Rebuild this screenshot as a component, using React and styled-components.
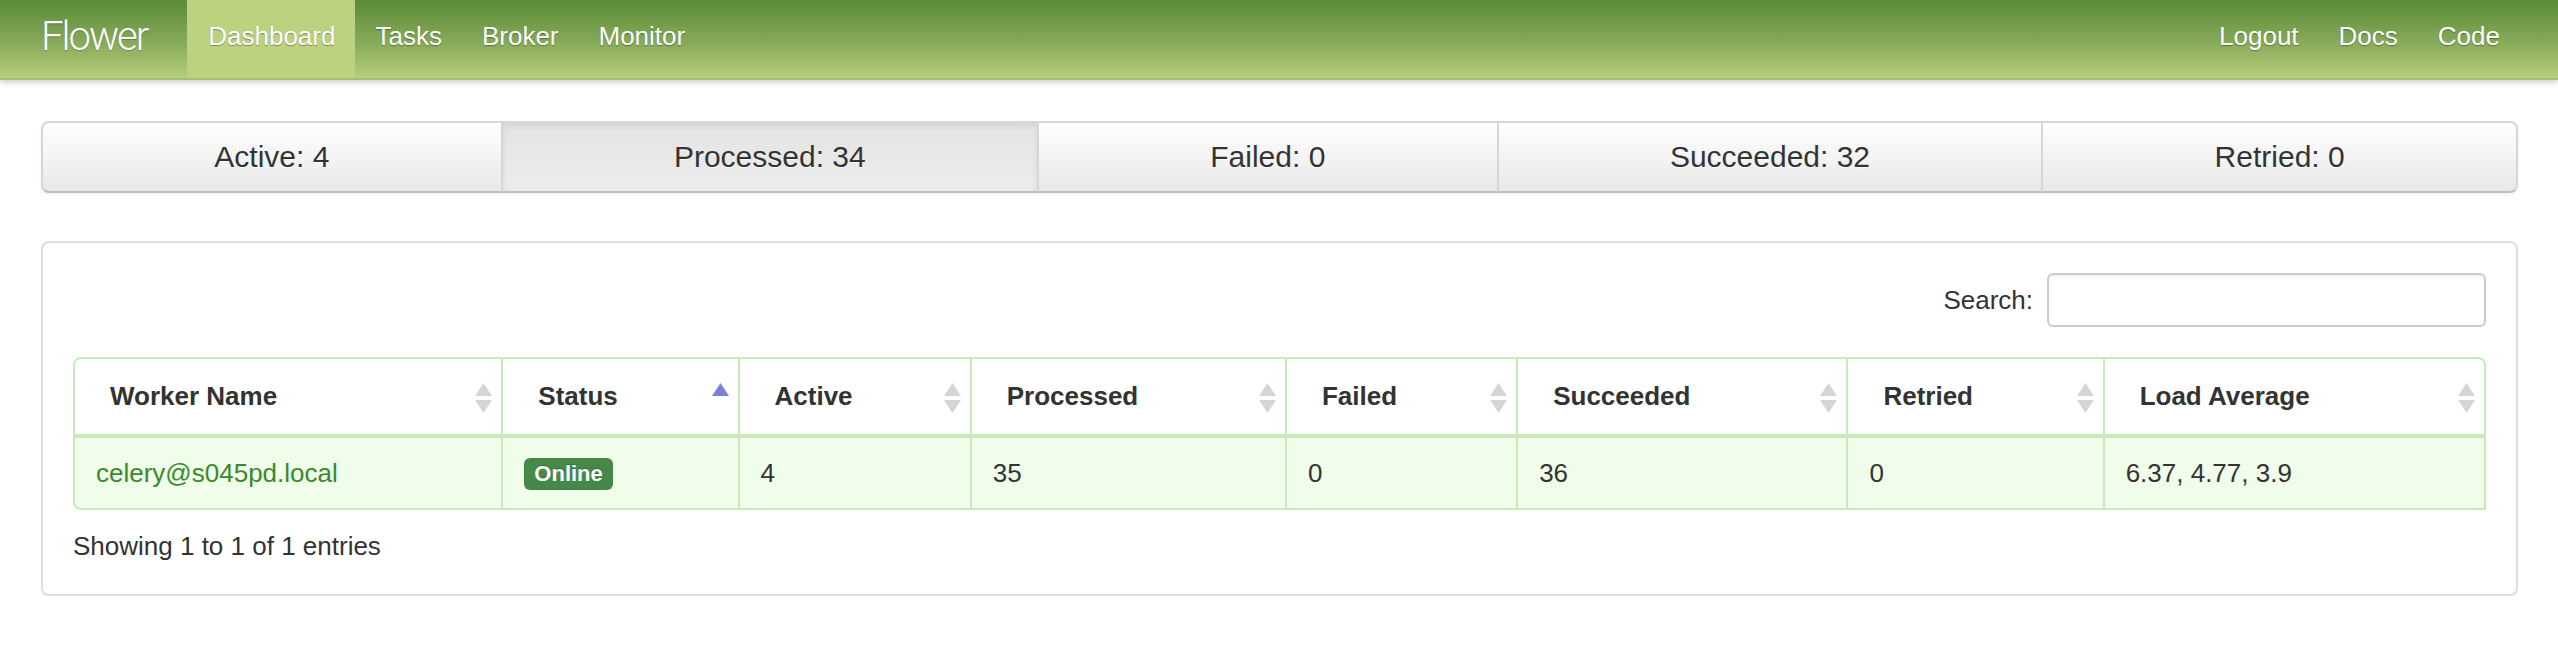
import React from 'react';
import styled, { createGlobalStyle } from 'styled-components';

const GlobalStyle = createGlobalStyle`
    body{
        margin: 0;
        background: #fff;
        color: #333;
        font-family: "Liberation Sans", Arial, sans-serif;
        font-size: 26px;
    }
`

const Navbar = styled.header`
    height: 78px;
    background: linear-gradient(to bottom, #5b8a37 0%, #87ab5a 55%, #b6cf7d 100%);
    border-bottom: 2px solid #a7bf6c;
    box-shadow: 0 2px 6px rgba(0, 0, 0, 0.22);
    display: flex;
    align-items: stretch;
    padding: 0 38px 0 41px;
`

const Brand = styled.a`
    font-family: Roboto, "Liberation Sans", sans-serif;
    font-weight: 300;
    font-size: 40px;
    letter-spacing: -2px;
    color: #fff;
    display: flex;
    align-items: center;
    padding-bottom: 6px;
    margin-right: 40px;
    text-shadow: 0 1px 1px rgba(0, 0, 0, 0.25);
`

const NavList = styled.nav`
    display: flex;
    align-items: stretch;
    margin-left: ${({ $right }) => $right ? 'auto' : '0'};
`

const NavLink = styled.a`
    display: flex;
    align-items: center;
    padding: 0 20px 5px;
    color: #fff;
    font-size: 26px;
    text-shadow: 0 1px 1px rgba(0, 0, 0, 0.35);
    background: ${({ $active }) => $active ? '#bcd27f' : 'transparent'};
    &:first-child{
        padding-left: ${({ $active }) => $active ? '21px' : '20px'};
    }
`

const Main = styled.main`
    padding: 41px 40px 0 41px;
`

const StatBar = styled.div`
    display: flex;
    height: 72px;
    margin-bottom: 48px;
    border-radius: 8px;
    box-shadow: 0 2px 3px rgba(0, 0, 0, 0.06);
`

const StatButton = styled.div`
    flex: 1 1 auto;
    display: flex;
    align-items: center;
    justify-content: center;
    padding: 0 20px;
    white-space: nowrap;
    font-size: 30px;
    color: #333;
    text-shadow: 0 1px 1px rgba(255, 255, 255, 0.75);
    border: 2px solid #d6d6d6;
    border-bottom-color: #bdbdbd;
    background: ${({ $active }) => $active
        ? 'linear-gradient(to bottom, #e4e4e4, #ececec)'
        : 'linear-gradient(to bottom, #ffffff, #e8e8e8)'};
    box-shadow: ${({ $active }) => $active ? 'inset 0 3px 6px rgba(0, 0, 0, 0.08)' : 'none'};
    & + &{
        margin-left: -2px;
    }
    &:first-child{
        border-radius: 8px 0 0 8px;
    }
    &:last-child{
        border-radius: 0 8px 8px 0;
    }
`

const Card = styled.section`
    border: 2px solid #dedede;
    border-radius: 8px;
    padding: 30px 30px 30px;
    box-shadow: 0 2px 2px rgba(0, 0, 0, 0.05);
`

const SearchRow = styled.div`
    display: flex;
    justify-content: flex-end;
    align-items: center;
    gap: 14px;
    margin-bottom: 30px;
    label{
        font-size: 26px;
        color: #333;
    }
    input{
        width: 439px;
        height: 54px;
        box-sizing: border-box;
        border: 2px solid #cccccc;
        border-radius: 6px;
        box-shadow: inset 0 2px 2px rgba(0, 0, 0, 0.06);
        outline: none;
        font-size: 26px;
        padding: 0 10px;
    }
`

const Table = styled.table`
    width: 100%;
    table-layout: fixed;
    border-collapse: separate;
    border-spacing: 0;
`

const HeadCell = styled.th`
    height: 75px;
    padding: 0 9px 0 35px;
    text-align: left;
    font-weight: bold;
    font-size: 26px;
    color: #333;
    background: #fff;
    border-top: 2px solid #c7eabb;
    border-right: 2px solid #c7eabb;
    border-bottom: 2px solid #c7eabb;
    &:first-child{
        border-left: 2px solid #c7eabb;
        border-top-left-radius: 8px;
    }
    &:last-child{
        border-top-right-radius: 8px;
    }
    .inner{
        display: flex;
        align-items: center;
        justify-content: space-between;
    }
`

const SortIcon = styled.span`
    display: flex;
    flex-direction: column;
    gap: 4px;
    padding-top: 3px;
`

const Cell = styled.td`
    height: 70px;
    padding: 0 10px 0 21px;
    font-size: 26px;
    color: ${({ $link }) => $link ? '#3b8a2a' : '#333'};
    background: #effdea;
    border-top: 2px solid #c7eabb;
    border-right: 2px solid #c7eabb;
    border-bottom: 2px solid #c7eabb;
    &:first-child{
        border-left: 2px solid #c7eabb;
        border-bottom-left-radius: 8px;
    }
`

const Badge = styled.span`
    display: inline-block;
    padding: 0 10px;
    height: 32px;
    line-height: 32px;
    border-radius: 6px;
    background: #468847;
    color: #fff;
    font-weight: bold;
    font-size: 22px;
    text-shadow: 0 -1px 0 rgba(0, 0, 0, 0.25);
`

const Info = styled.div`
    margin-top: 18px;
    line-height: 36px;
    font-size: 26px;
`

function Triangle({ up, color }){
    return(
        <svg width="17" height="13" viewBox="0 0 17 13">
            <path d={up ? 'M8.5 0 L17 13 L0 13 Z' : 'M0 0 L17 0 L8.5 13 Z'} fill={color} />
        </svg>
    )
}

function Sort({ dir }){
    const gray = '#d5d5d5';
    return(
        <SortIcon>
            <Triangle up color={dir === 'asc' ? '#7b82d8' : (dir ? 'transparent' : gray)} />
            <Triangle color={dir === 'desc' ? '#7b82d8' : (dir ? 'transparent' : gray)} />
        </SortIcon>
    )
}

const stats = [
    { label: 'Active', value: 4 },
    { label: 'Processed', value: 34, active: true },
    { label: 'Failed', value: 0 },
    { label: 'Succeeded', value: 32 },
    { label: 'Retried', value: 0 },
];

const columns = [
    { name: 'Worker Name', width: 430 },
    { name: 'Status', width: 236, sort: 'asc' },
    { name: 'Active', width: 232 },
    { name: 'Processed', width: 315 },
    { name: 'Failed', width: 231 },
    { name: 'Succeeded', width: 330 },
    { name: 'Retried', width: 256 },
    { name: 'Load Average', width: 381 },
];

const workers = [
    { name: 'celery@s045pd.local', status: 'Online', active: 4, processed: 35, failed: 0, succeeded: 36, retried: 0, load: '6.37, 4.77, 3.9' },
];

export default function App(){
    return(
        <>
            <GlobalStyle />
            <Navbar>
                <Brand>Flower</Brand>
                <NavList>
                    <NavLink $active>Dashboard</NavLink>
                    <NavLink>Tasks</NavLink>
                    <NavLink>Broker</NavLink>
                    <NavLink>Monitor</NavLink>
                </NavList>
                <NavList $right>
                    <NavLink>Logout</NavLink>
                    <NavLink>Docs</NavLink>
                    <NavLink>Code</NavLink>
                </NavList>
            </Navbar>
            <Main>
                <StatBar>
                    {stats.map((s) => (
                        <StatButton key={s.label} $active={s.active}>{`${s.label}: ${s.value}`}</StatButton>
                    ))}
                </StatBar>
                <Card>
                    <SearchRow>
                        <label>Search:</label>
                        <input type="text" />
                    </SearchRow>
                    <Table>
                        <colgroup>
                            {columns.map((c) => <col key={c.name} style={{ width: c.width }} />)}
                        </colgroup>
                        <thead>
                            <tr>
                                {columns.map((c) => (
                                    <HeadCell key={c.name}>
                                        <div className="inner">
                                            <span>{c.name}</span>
                                            <Sort dir={c.sort} />
                                        </div>
                                    </HeadCell>
                                ))}
                            </tr>
                        </thead>
                        <tbody>
                            {workers.map((w) => (
                                <tr key={w.name}>
                                    <Cell $link>{w.name}</Cell>
                                    <Cell><Badge>{w.status}</Badge></Cell>
                                    <Cell>{w.active}</Cell>
                                    <Cell>{w.processed}</Cell>
                                    <Cell>{w.failed}</Cell>
                                    <Cell>{w.succeeded}</Cell>
                                    <Cell>{w.retried}</Cell>
                                    <Cell>{w.load}</Cell>
                                </tr>
                            ))}
                        </tbody>
                    </Table>
                    <Info>Showing 1 to 1 of 1 entries</Info>
                </Card>
            </Main>
        </>
    )
}
